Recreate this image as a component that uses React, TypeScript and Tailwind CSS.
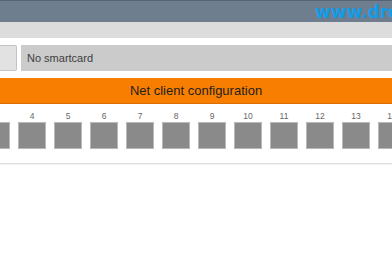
const slots = Array.from({ length: 16 }, (_, i) => i + 1);

export default function App() {
  return (
    <div className="h-[272px] w-[392px] overflow-hidden bg-white font-['Liberation_Sans',Arial,sans-serif]">
      <header className="flex h-[22px] items-end overflow-hidden border-t border-[#58636f] bg-[#6e7e8e] pl-[315px]">
        <span className="mb-[1px] whitespace-nowrap font-['DejaVu_Sans',sans-serif] text-[17px] font-bold leading-none text-[#129be6]">
          www.dreambox
        </span>
      </header>
      <div className="h-[16px] bg-[#dcdcdc]" />

      <div className="mt-[7px] flex h-[26px] gap-[4px]">
        <div className="w-[17px] rounded-r-[2px] border border-l-0 border-[#c4c4c4] bg-[#e2e2e2]" />
        <div className="flex flex-1 items-center bg-[#cbcbcb] pl-[6px] text-[11px] text-[#3d3d3d]">
          No smartcard
        </div>
      </div>

      <div className="mt-[7px] flex h-[26px] items-center justify-center border-b border-[#d86d00] bg-[#f77e00] text-[13px] text-[#1e1e1e]">
        Net client configuration
      </div>

      <div className="ml-[-90px] mt-[6px] flex gap-[8px]">
        {slots.map((n) => (
          <div key={n} className="flex w-[28px] shrink-0 flex-col items-center">
            <span className="h-[12px] text-[8.5px] leading-[12px] text-[#666666]">{n}</span>
            <div className="h-[27px] w-[28px] border border-[#b8b8b8] bg-[#8a8a8a]" />
          </div>
        ))}
      </div>

      <div className="mt-[14px] h-[2px] border-t border-[#dedede] bg-[#f3f3f3]" />
    </div>
  );
}
